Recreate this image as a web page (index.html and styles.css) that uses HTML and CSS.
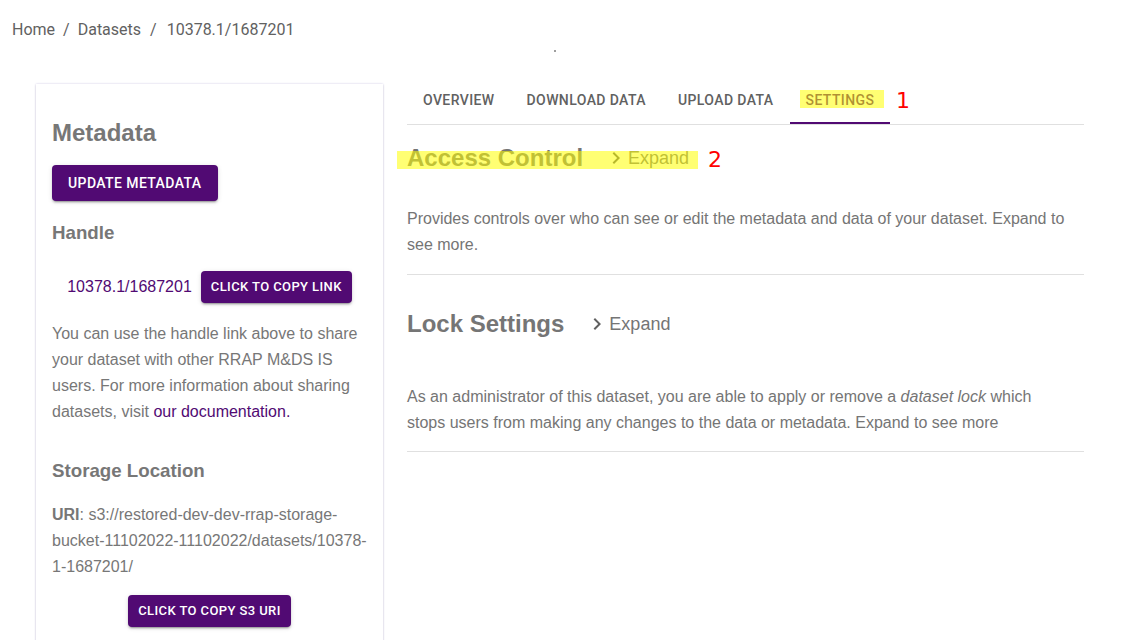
FILE: index.html
```html
<!DOCTYPE html>
<html>
<head>
<meta charset="utf-8">
<link rel="stylesheet" href="styles.css">
</head>
<body>
<div class="page">
  <nav class="crumbs">
    <span>Home</span><span class="sep">/</span><span>Datasets</span><span class="sep sep-2">/</span><span>10378.1/1687201</span>
  </nav>
  <div class="dotrow"><span class="dot"></span></div>
  <div class="main">
    <aside class="card">
      <h2 class="card-title">Metadata</h2>
      <button class="btn btn-update">Update Metadata</button>
      <h3 class="sub">Handle</h3>
      <div class="handle-row">
        <a class="link">10378.1/1687201</a>
        <button class="btn btn-sm">Click to copy link</button>
      </div>
      <p class="body-text share">You can use the handle link above to share your dataset with other RRAP M&amp;DS IS users. For more information about sharing datasets, visit <a class="link">our documentation.</a></p>
      <h3 class="sub storage">Storage Location</h3>
      <p class="body-text uri"><b>URI</b>: s3://restored-dev-dev-rrap-storage-bucket-11102022-11102022/datasets/10378-1-1687201/</p>
      <div class="center"><button class="btn btn-sm">Click to copy S3 URI</button></div>
    </aside>
    <section class="content">
      <div class="tabs">
        <div class="tab">Overview</div>
        <div class="tab">Download Data</div>
        <div class="tab">Upload Data</div>
        <div class="tab active">Settings</div>
      </div>
      <div class="section first">
        <div class="sec-head">
          <h2 class="sec-title">Access Control</h2>
          <span class="expand"><svg viewBox="0 0 24 24" width="24" height="24"><path d="M10 6 8.59 7.41 13.17 12l-4.58 4.59L10 18l6-6z" fill="#616161"/></svg>Expand</span>
        </div>
        <p class="sec-text">Provides controls over who can see or edit the metadata and data of your dataset. Expand to see more.</p>
      </div>
      <div class="section second">
        <div class="sec-head">
          <h2 class="sec-title">Lock Settings</h2>
          <span class="expand"><svg viewBox="0 0 24 24" width="24" height="24"><path d="M10 6 8.59 7.41 13.17 12l-4.58 4.59L10 18l6-6z" fill="#616161"/></svg>Expand</span>
        </div>
        <p class="sec-text lock">As an administrator of this dataset, you are able to apply or remove a <i>dataset lock</i> which stops users from making any changes to the data or metadata. Expand to see more</p>
      </div>
    </section>
  </div>
  <div class="hl hl-1"></div>
  <div class="note note-1">1</div>
  <div class="hl hl-2"></div>
  <div class="note note-2">2</div>
</div>
</body>
</html>
```
FILE: styles.css
```css
* { box-sizing: border-box; }
html, body { margin: 0; padding: 0; background: #fff; }
body { width: 1125px; height: 640px; overflow: hidden; }
.page { position: relative; width: 1125px; height: 640px; overflow: hidden; }

.crumbs {
  font-family: Roboto, "Liberation Sans", sans-serif;
  font-size: 16px;
  line-height: 24px;
  color: #616161;
  padding: 18px 12px 0;
  height: 42px;
}
.crumbs .sep { margin: 0 8px; }
.crumbs .sep-2 { margin: 0 10px 0 9px; }

.dotrow { height: 34px; padding-left: 554px; padding-top: 8px; }
.dot { display: block; width: 2px; height: 2px; background: #9e9e9e; }

.main {
  display: flex;
  align-items: flex-start;
  padding-left: 36px;
  gap: 24px;
}

.card {
  width: 347px;
  height: 600px;
  margin-top: 8px;
  padding: 16px 16px 0;
  background: #fff;
  box-shadow: 0 0 2px rgba(90, 70, 170, 0.28), 0 1px 2px rgba(0,0,0,0.10);
  font-family: "Liberation Sans", Arial, sans-serif;
  color: #777;
}
.card-title {
  margin: 19px 0 0;
  font-size: 24px;
  line-height: 28px;
  font-weight: bold;
}
.btn {
  display: inline-block;
  border: 0;
  border-radius: 4px;
  background: #510a73;
  color: #fff;
  font-family: Roboto, "Liberation Sans", sans-serif;
  font-weight: 500;
  font-size: 14px;
  letter-spacing: 0.4px;
  text-transform: uppercase;
  line-height: 24px;
  padding: 6px 16px;
  box-shadow: 0 3px 1px -2px rgba(0,0,0,.2), 0 2px 2px 0 rgba(0,0,0,.14), 0 1px 5px 0 rgba(0,0,0,.12);
}
.btn-update { margin-top: 18px; }
.sub {
  margin: 21px 0 0;
  font-size: 18.72px;
  line-height: 22px;
  font-weight: bold;
}
.sub.storage { margin-top: 35px; }
.handle-row {
  margin-top: 27px;
  display: flex;
  justify-content: center;
  align-items: center;
  gap: 9px;
}
.link { color: #510a73; text-decoration: none; font-size: 16px; }
.btn-sm {
  font-size: 13px;
  line-height: 22px;
  padding: 5px 10px;
  letter-spacing: 0.4px;
}
.body-text {
  margin: 16px 0 0;
  font-size: 16px;
  line-height: 26px;
}
.share { margin-top: 18px; }
.uri { margin-top: 20px; }
.center { display: flex; justify-content: center; margin-top: 15px; }

.content { width: 677px; }
.tabs {
  display: flex;
  border-bottom: 1px solid #e0e0e0;
}
.tab {
  font-family: Roboto, "Liberation Sans", sans-serif;
  font-weight: 500;
  font-size: 14px;
  letter-spacing: 0.4px;
  text-transform: uppercase;
  color: #616161;
  padding: 12px 16px 10px;
  height: 48px;
  line-height: 24px;
  border-bottom: 2px solid transparent;
}
.tab.active { color: #510a73; border-bottom-color: #510a73; }

.section {
  font-family: "Liberation Sans", Arial, sans-serif;
  color: #757575;
  border-bottom: 1px solid #e0e0e0;
}
.sec-head { display: flex; align-items: center; height: 28px; }
.first .sec-head { margin-top: 19px; }
.second .sec-head { margin-top: 35px; }
.sec-title {
  margin: 0;
  font-size: 24px;
  line-height: 28px;
  font-weight: bold;
}
.expand {
  display: flex;
  align-items: center;
  margin-left: 21px;
  font-size: 18px;
  line-height: 24px;
  color: #757575;
}
.expand svg { display: block; }
.sec-text {
  margin: 34px 0 0;
  padding-right: 16px;
  font-size: 16px;
  line-height: 26px;
  padding-bottom: 16px;
}
.sec-text.lock { margin-top: 46px; padding-bottom: 15px; }

.hl {
  position: absolute;
  background: rgba(255, 255, 0, 0.55);
}
.hl-1 { left: 800px; top: 90px; width: 84px; height: 18px; }
.hl-2 { left: 397px; top: 151px; width: 301px; height: 18px; }
.note {
  position: absolute;
  font-family: "DejaVu Sans", sans-serif;
  font-size: 22px;
  line-height: 24px;
  color: #ff0000;
}
.note-1 { left: 896px; top: 89px; }
.note-2 { left: 708px; top: 148px; }
```
